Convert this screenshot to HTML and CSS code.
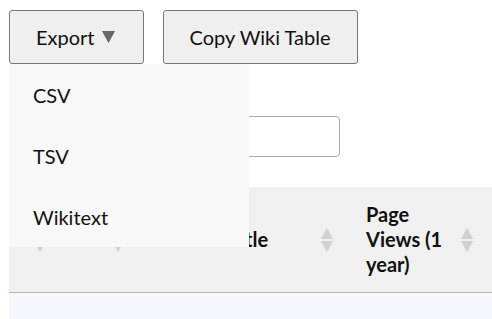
FILE: index.html
```html
<!DOCTYPE html>
<html lang="en">
<head>
  <meta charset="UTF-8" />
  <meta name="viewport" content="width=device-width, initial-scale=1.0" />
  <title>Pages</title>
  <link rel="stylesheet" href="styles.css">
</head>
<body>
  <div class="toolbar">
    <div class="dropdown">
      <button class="btn btn-export">Export<svg class="caret" width="13" height="12" viewBox="0 0 13 12"><path d="M0 0H13L6.5 12Z" fill="#666"/></svg></button>
      <ul class="menu">
        <li>CSV</li>
        <li>TSV</li>
        <li>Wikitext</li>
      </ul>
    </div>
    <button class="btn">Copy Wiki Table</button>
  </div>

  <div class="filter">
    <label for="search">Filter:</label>
    <input id="search" type="text" />
  </div>

  <div class="table-wrap">
    <table class="pages">
      <colgroup>
        <col style="width: 47px">
        <col style="width: 78px">
        <col style="width: 209px">
        <col style="width: 140px">
        <col style="width: 200px">
      </colgroup>
      <thead>
        <tr>
          <th class="narrow"><div class="th-inner"><span>#</span><svg class="sort" width="12" height="24" viewBox="0 0 12 24"><path d="M6 0L12 11H0Z M0 13H12L6 24Z" fill="#cfcfcf"/></svg></div></th>
          <th class="narrow"><div class="th-inner"><span>Rank</span><svg class="sort" width="12" height="24" viewBox="0 0 12 24"><path d="M6 0L12 11H0Z M0 13H12L6 24Z" fill="#cfcfcf"/></svg></div></th>
          <th class="title-col"><div class="th-inner"><span>Title</span><svg class="sort" width="12" height="24" viewBox="0 0 12 24"><path d="M6 0L12 11H0Z M0 13H12L6 24Z" fill="#cfcfcf"/></svg></div></th>
          <th><div class="th-inner"><span>Page Views (1 year)</span><svg class="sort" width="12" height="24" viewBox="0 0 12 24"><path d="M6 0L12 11H0Z M0 13H12L6 24Z" fill="#cfcfcf"/></svg></div></th>
          <th></th>
        </tr>
      </thead>
      <tbody>
        <tr class="odd">
          <td></td><td></td><td></td><td></td><td></td>
        </tr>
      </tbody>
    </table>
  </div>
</body>
</html>
```

FILE: styles.css
```css
body {
  margin: 0;
  padding: 10px 0 0 9px;
  font-family: 'Lato', 'Open Sans', sans-serif;
  font-size: 20px;
  color: #111;
  background: #fff;
  overflow: hidden;
}

.toolbar {
  display: flex;
  gap: 19px;
}

.dropdown {
  position: relative;
}

.btn {
  display: flex;
  align-items: center;
  height: 54px;
  padding: 0 26px;
  font-family: inherit;
  font-size: 20px;
  color: #111;
  background: #efefef;
  border: 1px solid #777;
  border-radius: 3px;
}

.btn-export {
  padding-right: 28px;
}

.caret {
  margin-left: 7px;
}

.menu {
  position: absolute;
  top: 54px;
  left: 0;
  z-index: 2;
  width: 240px;
  margin: 0;
  padding: 0;
  list-style: none;
  background: #f8f8f8;
}

.menu li {
  padding: 19px 24px 17px;
  line-height: 25px;
}

.filter {
  display: flex;
  align-items: center;
  justify-content: flex-end;
  width: 331px;
  gap: 8px;
  margin-top: 52px;
}

.filter input {
  width: 200px;
  height: 41px;
  box-sizing: border-box;
  border: 1px solid #aaa;
  border-radius: 4px;
  font: inherit;
}

.table-wrap {
  margin-top: 30px;
  overflow: hidden;
}

.pages {
  table-layout: fixed;
  width: 674px;
  border-collapse: collapse;
}

.pages th {
  height: 105px;
  padding: 0 10px 0 23px;
  text-align: left;
  font-weight: 700;
  line-height: 25px;
  background: #f0f0f0;
  border-bottom: 1px solid #b4b4b4;
}

.pages .narrow {
  padding-left: 6px;
}

.pages .title-col {
  padding-left: 94px;
}

.th-inner {
  display: flex;
  align-items: center;
  justify-content: space-between;
  gap: 4px;
}

.sort {
  flex: none;
}

.pages td {
  height: 40px;
  background: #f4f8fe;
}
```
